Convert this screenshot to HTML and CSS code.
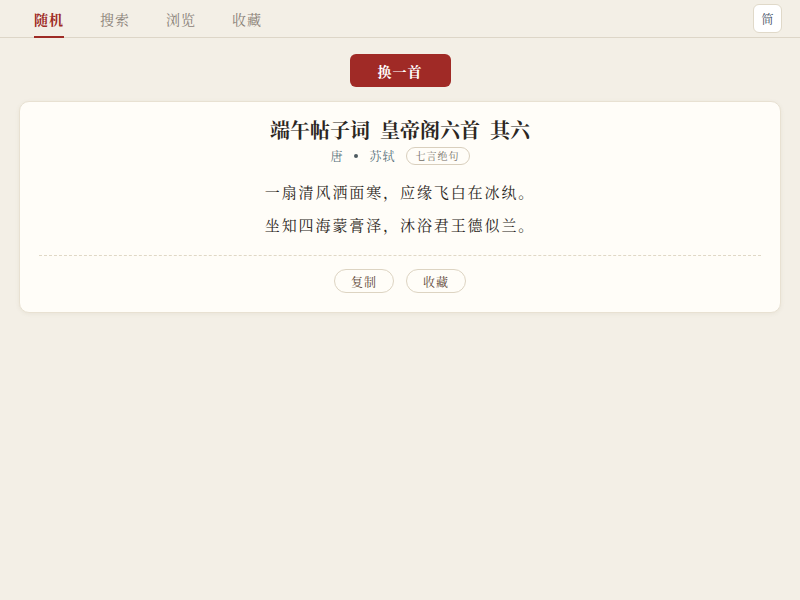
FILE: index.html
```html
<!DOCTYPE html>
<html lang="zh-CN">
<head>
<meta charset="UTF-8" />
<meta name="viewport" content="width=device-width, initial-scale=1" />
<title>诗词</title>
<link rel="stylesheet" href="styles.css">
</head>
<body>

<!-- 顶部导航 -->
<div class="topbar">
  <div class="tabs">
    <div class="tab active">随机</div>
    <div class="tab">搜索</div>
    <div class="tab">浏览</div>
    <div class="tab">收藏</div>
  </div>
  <button class="lang-btn">简</button>
</div>

<div class="main">
  <button class="next-btn">换一首</button>

  <!-- 诗词卡片 -->
  <div class="poem-card">
    <h2 class="poem-title">端午帖子词&nbsp;&nbsp;皇帝阁六首&nbsp;&nbsp;其六</h2>
    <div class="poem-meta">
      <span>唐</span>
      <span class="dot"></span>
      <span>苏轼</span>
      <span class="tag">七言绝句</span>
    </div>
    <div class="poem-body">
      <p>一扇清风洒面寒，应缘飞白在冰纨。</p>
      <p>坐知四海蒙膏泽，沐浴君王德似兰。</p>
    </div>
    <div class="poem-actions">
      <button class="small-btn">复制</button>
      <button class="small-btn">收藏</button>
    </div>
  </div>
</div>

</body>
</html>
```

FILE: styles.css
```css
/* 基本样式 */
body {
  margin: 0;
  background: #f3efe6;
  color: #2b2622;
  font-family: "Noto Serif CJK SC", serif;
}
button {
  font-family: inherit;
  cursor: pointer;
}
/* 顶部导航 */
.topbar {
  height: 37px;
  border-bottom: 1px solid #ddd6c8;
  display: flex;
  align-items: center;
  justify-content: space-between;
  padding: 0 18px 0 34px;
}
.tabs {
  display: flex;
  align-self: stretch;
  gap: 36px;
}
.tab {
  font-size: 14px;
  letter-spacing: 1px;
  color: #8a8178;
  display: flex;
  align-items: center;
  padding-top: 1px;
  border-bottom: 2px solid transparent;
  margin-bottom: -1px;
}
.tab.active {
  color: #9e2b25;
  font-weight: 700;
  border-bottom-color: #9e2b25;
}
.lang-btn {
  width: 29px;
  height: 29px;
  padding: 0;
  background: #fff;
  border: 1px solid #e0d9c9;
  border-radius: 6px;
  font-size: 12px;
  color: #3b4a5c;
}
/* 主体 */
.main {
  padding: 16px 19px;
  display: flex;
  flex-direction: column;
  align-items: center;
}
.next-btn {
  width: 101px;
  height: 33px;
  background: #a02a26;
  color: #fff;
  border: none;
  border-radius: 6px;
  font-size: 14px;
  font-weight: 700;
  letter-spacing: 1px;
  margin-bottom: 14px;
}
.poem-card {
  align-self: stretch;
  background: #fffdf8;
  border: 1px solid #e8e1d2;
  border-radius: 10px;
  box-shadow: 0 1px 4px rgba(120, 100, 70, 0.08);
  padding: 14px 19px 19px;
  text-align: center;
}
.poem-title {
  margin: 0;
  font-size: 20px;
  font-weight: 700;
  line-height: 28px;
}
.poem-meta {
  margin-top: 3px;
  height: 18px;
  line-height: 18px;
  font-size: 12px;
  color: #557078;
  display: flex;
  justify-content: center;
  align-items: center;
  letter-spacing: 1px;
}
/* 朝代和作者之间的圆点 */
.poem-meta .dot {
  width: 4px;
  height: 4px;
  border-radius: 50%;
  background: #4e5a60;
  margin: 0 12px 0 10px;
}
.tag {
  font-size: 10px;
  color: #6f6a62;
  border: 1px solid #d9cfbd;
  border-radius: 9px;
  padding: 0 9px;
  line-height: 16px;
  margin-left: 10px;
}
.poem-body {
  margin-top: 10px;
  padding-bottom: 14px;
  border-bottom: 1px dashed #e0d8c6;
}
.poem-body p {
  margin: 0;
  font-size: 15px;
  line-height: 33px;
  letter-spacing: 1.9px;
}
.poem-actions {
  margin-top: 13px;
  display: flex;
  justify-content: center;
  gap: 12px;
}
.small-btn {
  width: 60px;
  height: 24px;
  padding: 0;
  background: #fffdf8;
  border: 1px solid #ddd4c2;
  border-radius: 12px;
  font-size: 12px;
  letter-spacing: 1px;
  color: #5e4636;
}
```
